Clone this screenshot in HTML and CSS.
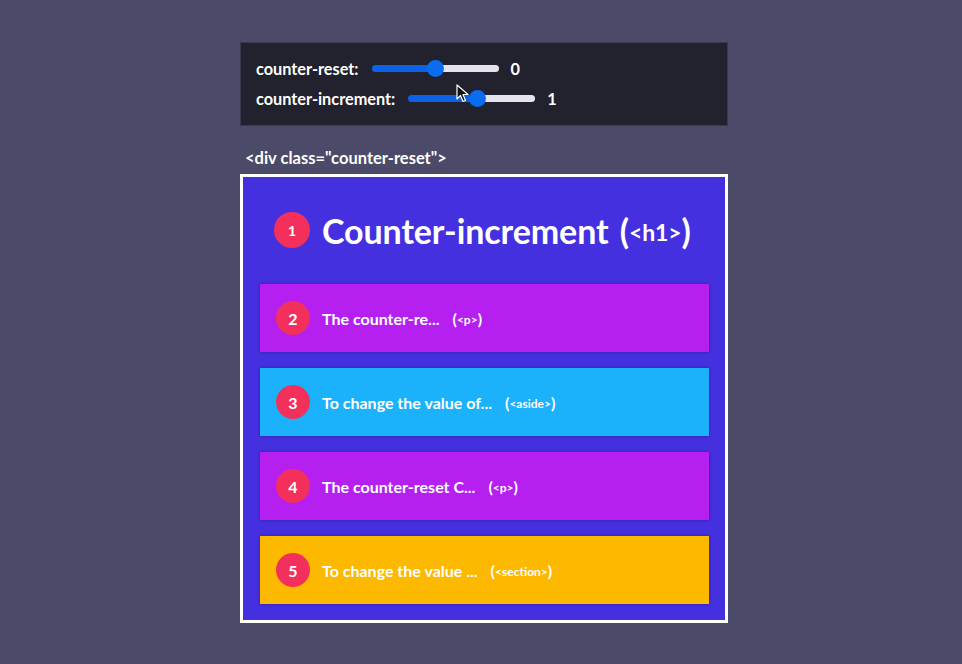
FILE: index.html
```html
<!DOCTYPE html>
<html lang="en">
<head>
<meta charset="utf-8">
<title>counter-reset demo</title>
<link rel="stylesheet" href="styles.css">
</head>
<body>
<main class="wrap">
  <section class="panel">
    <div class="ctrl">
      <label class="ctrl-label" for="r">counter-reset:</label>
      <input class="range" id="r" type="range" min="-5" max="5" value="0" style="--p:52%">
      <span class="ctrl-val">0</span>
    </div>
    <div class="ctrl">
      <label class="ctrl-label" for="i">counter-increment:</label>
      <input class="range" id="i" type="range" min="-10" max="10" value="1" style="--p:55%">
      <span class="ctrl-val">1</span>
    </div>
    <svg class="cursor" width="14" height="20" viewBox="0 0 14 20"><path d="M1 1 L1 15 L4.5 11.5 L7 17.5 L9.5 16.5 L7 10.5 L12 10.5 Z" fill="#111" stroke="#fff" stroke-width="1.2" stroke-linejoin="round"/></svg>
  </section>

  <div class="code-label">&lt;div class="counter-reset"&gt;</div>

  <section class="box">
    <header class="head">
      <span class="num num-lg">1</span>
      <h1 class="title">Counter-increment <span class="tag">(<small>&lt;h1&gt;</small>)</span></h1>
    </header>
    <div class="item purple"><span class="num">2</span><span class="txt">The counter-re...</span><span class="tag">(<small>&lt;p&gt;</small>)</span></div>
    <div class="item cyan"><span class="num">3</span><span class="txt">To change the value of...</span><span class="tag">(<small>&lt;aside&gt;</small>)</span></div>
    <div class="item purple"><span class="num">4</span><span class="txt">The counter-reset C...</span><span class="tag">(<small>&lt;p&gt;</small>)</span></div>
    <div class="item yellow"><span class="num">5</span><span class="txt">To change the value ...</span><span class="tag">(<small>&lt;section&gt;</small>)</span></div>
  </section>
</main>
</body>
</html>
```

FILE: styles.css
```css
* { box-sizing: border-box; }
html, body { margin: 0; padding: 0; }
body {
  background: #4b4a68;
  font-family: Lato, "Open Sans", sans-serif;
  color: #fff;
  height: 664px;
  overflow: hidden;
}
.wrap {
  width: 488px;
  margin: 42px 0 0 240px;
}
.panel {
  position: relative;
  height: 84px;
  background: #22212e;
  border: 1px solid #3a3950;
  padding: 17px 15px 0;
  display: flex;
  flex-direction: column;
  gap: 14px;
}
.ctrl {
  display: flex;
  align-items: center;
  height: 16px;
  font-size: 16.3px;
  font-weight: 700;
}
.ctrl-label { margin-right: 13px; }
.ctrl-val { margin-left: 12px; }
.range {
  -webkit-appearance: none;
  appearance: none;
  margin: 0;
  width: 127px;
  height: 17px;
  background: transparent;
}
.range::-webkit-slider-runnable-track {
  height: 7px;
  border-radius: 4px;
  background: linear-gradient(to right, #0b62e6 0 var(--p), #e4e4ea var(--p) 100%);
}
.range::-webkit-slider-thumb {
  -webkit-appearance: none;
  width: 17px;
  height: 17px;
  margin-top: -5px;
  border-radius: 50%;
  background: #0b6cf0;
  border: none;
}
.cursor {
  position: absolute;
  left: 215px;
  top: 41px;
}
.code-label {
  margin: 22px 0 0 5px;
  height: 26px;
  font-size: 16.5px;
  font-weight: 700;
}
.box {
  border: 3px solid #fff;
  background: #4530df;
  padding: 0 16px 16px 17px;
  display: flex;
  flex-direction: column;
  gap: 16px;
}
.head {
  height: 91px;
  display: flex;
  align-items: center;
  padding: 15px 0 0 14px;
  gap: 12px;
}
.title {
  margin: 0;
  font-size: 34px;
  font-weight: 700;
  letter-spacing: -0.1px;
  white-space: nowrap;
}
.title .tag { font-size: 34px; margin-left: 3px; }
.title .tag small { font-size: 23px; vertical-align: 3px; }
.num {
  flex: none;
  width: 34px;
  height: 34px;
  border-radius: 50%;
  background: #f3305b;
  display: flex;
  align-items: center;
  justify-content: center;
  font-size: 16px;
  font-weight: 700;
}
.num-lg {
  width: 36px;
  height: 36px;
  font-size: 14px;
}
.item {
  height: 68px;
  display: flex;
  align-items: center;
  padding-left: 16px;
  gap: 12px;
  font-size: 16px;
  font-weight: 700;
  box-shadow: 0 0 3px rgba(20, 10, 60, 0.4);
}
.item .tag { margin-left: 1px; font-size: 16px; }
.item .tag small { font-size: 12px; vertical-align: 1px; }
.purple { background: #b520f1; }
.cyan { background: #1bb1fb; }
.yellow { background: #fdb800; }
```
